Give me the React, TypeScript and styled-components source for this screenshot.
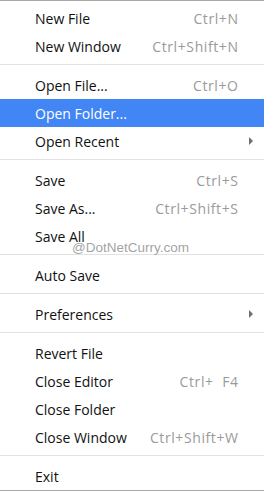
import React from "react";
import styled, {createGlobalStyle} from "styled-components";

type Entry =
    | {kind: "item"; label: string; shortcut?: string; submenu?: boolean; active?: boolean}
    | {kind: "sep"}

const entries: Entry[] = [
    {kind: "item", label: "New File", shortcut: "Ctrl+N"},
    {kind: "item", label: "New Window", shortcut: "Ctrl+Shift+N"},
    {kind: "sep"},
    {kind: "item", label: "Open File...", shortcut: "Ctrl+O"},
    {kind: "item", label: "Open Folder...", active: true},
    {kind: "item", label: "Open Recent", submenu: true},
    {kind: "sep"},
    {kind: "item", label: "Save", shortcut: "Ctrl+S"},
    {kind: "item", label: "Save As...", shortcut: "Ctrl+Shift+S"},
    {kind: "item", label: "Save All"},
    {kind: "sep"},
    {kind: "item", label: "Auto Save"},
    {kind: "sep"},
    {kind: "item", label: "Preferences", submenu: true},
    {kind: "sep"},
    {kind: "item", label: "Revert File"},
    {kind: "item", label: "Close Editor", shortcut: "Ctrl+  F4"},
    {kind: "item", label: "Close Folder"},
    {kind: "item", label: "Close Window", shortcut: "Ctrl+Shift+W"},
    {kind: "sep"},
    {kind: "item", label: "Exit"},
]

export default function App() {
    return (
        <>
            <GlobalStyle/>
            <Menu>
                {entries.map((e, i) => e.kind === "sep"
                    ? <Separator key={i}/>
                    : <Item key={i} $active={e.active}>
                        <Label>{e.label}</Label>
                        {e.shortcut && <Shortcut $active={e.active}>{e.shortcut}</Shortcut>}
                        {e.submenu && <Arrow/>}
                    </Item>)}
                <Watermark>@DotNetCurry.com</Watermark>
            </Menu>
        </>
    )
}

const GlobalStyle = createGlobalStyle`
  body {
    margin: 0;
    background: #fff;
  }
`

const Menu = styled.div`
  position: relative;
  width: 264px;
  box-sizing: border-box;
  border-top: 1px solid #a9a9a9;
  border-bottom: 1px solid #a9a9a9;
  padding-top: 3px;
  background: #fff;
  font-family: "Open Sans", sans-serif;
  font-size: 14px;
`

const Item = styled.div<{ $active?: boolean }>`
  position: relative;
  display: flex;
  align-items: center;
  height: 28px;
  padding: 0 26px 0 35px;
  background: ${p => p.$active ? "#4285f4" : "transparent"};
  color: ${p => p.$active ? "#fff" : "#111"};
`

const Label = styled.span`
  flex: 1;
  white-space: nowrap;
`

const Shortcut = styled.span<{ $active?: boolean }>`
  color: ${p => p.$active ? "#fff" : "#9a9a9a"};
  white-space: pre;
  letter-spacing: 0.6px;
  margin-right: -0.6px;
`

const Arrow = styled.span`
  position: absolute;
  right: 11px;
  top: 10px;
  width: 0;
  height: 0;
  border-top: 4px solid transparent;
  border-bottom: 4px solid transparent;
  border-left: 4px solid #6f6f6f;
`

const Separator = styled.div`
  height: 1px;
  margin: 4px 0 6px;
  background: #e2e2e2;
`

const Watermark = styled.div`
  position: absolute;
  left: 72px;
  top: 239px;
  font-family: "Liberation Sans", Arial, sans-serif;
  font-size: 13.5px;
  color: rgba(130, 130, 130, 0.75);
  text-shadow: 0 0 1px #fff;
  pointer-events: none;
`
